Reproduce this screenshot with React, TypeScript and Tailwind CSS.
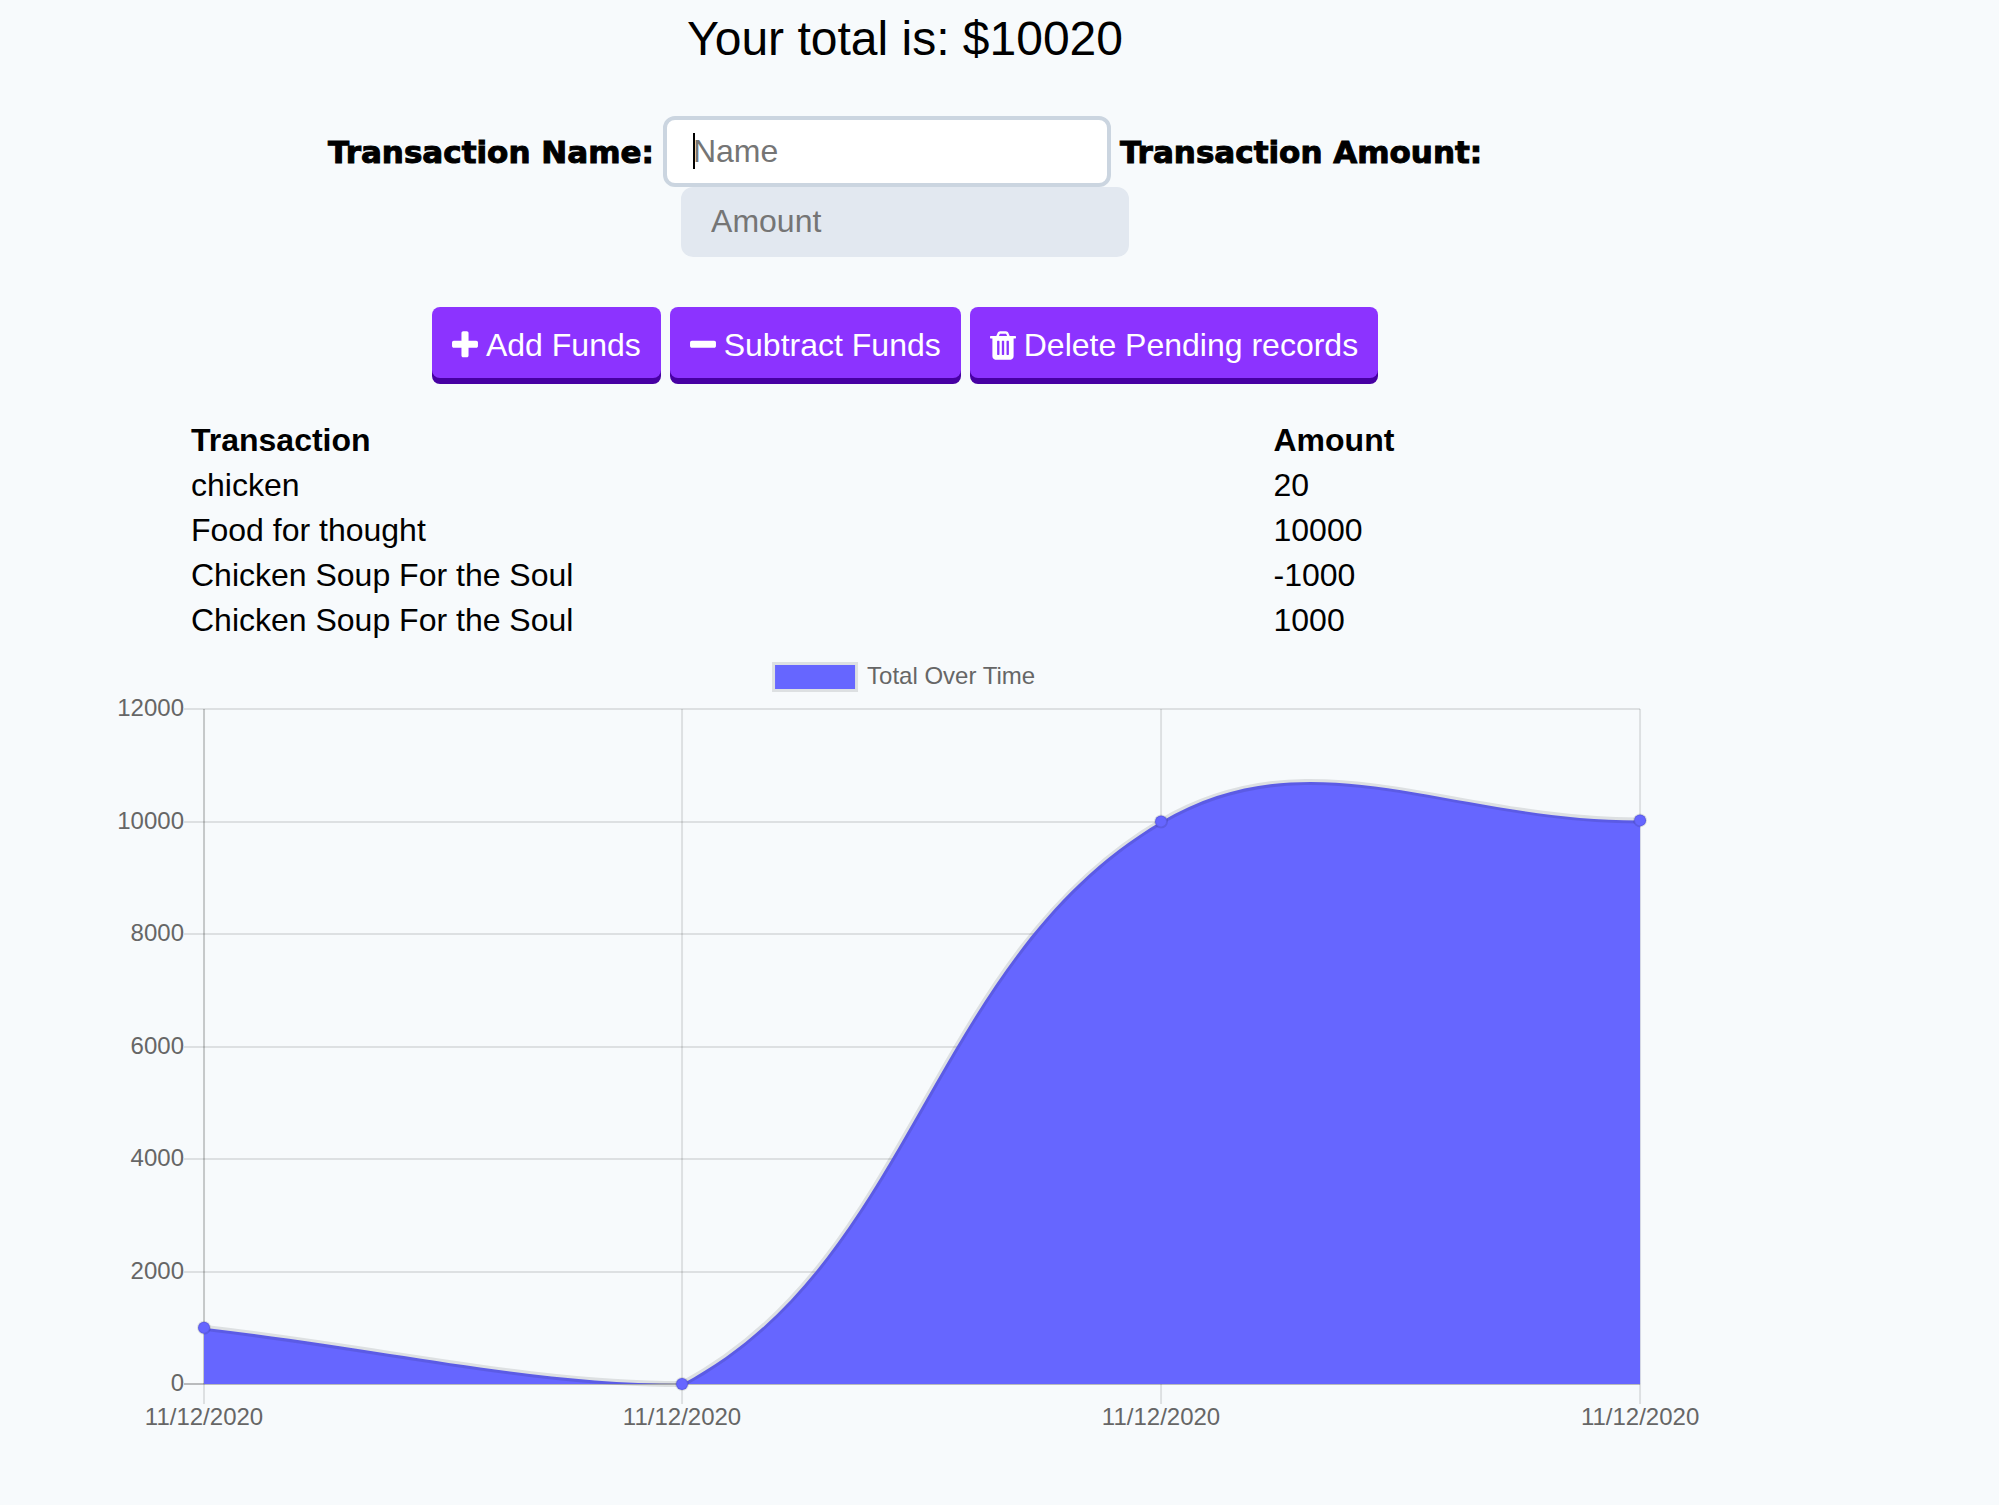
import type { ReactNode } from "react";

const transactions = [
  { name: "chicken", amount: 20 },
  { name: "Food for thought", amount: 10000 },
  { name: "Chicken Soup For the Soul", amount: -1000 },
  { name: "Chicken Soup For the Soul", amount: 1000 },
];

const icons = {
  plus: "M1600 736v192q0 40-28 68t-68 28h-416v416q0 40-28 68t-68 28h-192q-40 0-68-28t-28-68v-416h-416q-40 0-68-28t-28-68v-192q0-40 28-68t68-28h416v-416q0-40 28-68t68-28h192q40 0 68 28t28 68v416h416q40 0 68 28t28 68z",
  minus:
    "M1600 736v192q0 40-28 68t-68 28h-1216q-40 0-68-28t-28-68v-192q0-40 28-68t68-28h1216q40 0 68 28t28 68z",
  trash:
    "M704 1376v-704q0-14-9-23t-23-9h-64q-14 0-23 9t-9 23v704q0 14 9 23t23 9h64q14 0 23-9t9-23zm256 0v-704q0-14-9-23t-23-9h-64q-14 0-23 9t-9 23v704q0 14 9 23t23 9h64q14 0 23-9t9-23zm256 0v-704q0-14-9-23t-23-9h-64q-14 0-23 9t-9 23v704q0 14 9 23t23 9h64q14 0 23-9t9-23zm-544-992h448l-48-117q-7-9-17-11h-317q-10 2-17 11zm928 32v64q0 14-9 23t-23 9h-96v948q0 83-47 143.500t-113 60.500h-832q-66 0-113-58.500t-47-141.500v-952h-96q-14 0-23-9t-9-23v-64q0-14 9-23t23-9h309l70-167q15-37 54-63t79-26h320q40 0 79 26t54 63l70 167h309q14 0 23 9t9 23z",
};

function ActionButton({ icon, children }: { icon: keyof typeof icons; children: ReactNode }) {
  return (
    <button
      type="button"
      className="flex h-[71px] items-center gap-2 rounded-lg bg-[#8c33ff] px-5 pt-[5px] text-[32px] leading-[48px] text-white shadow-[0_6px_0_#4700a3]"
    >
      <svg viewBox="192 0 1408 1792" className="h-[33px] w-[26px] shrink-0" fill="currentColor" aria-hidden="true">
        <path d={icons[icon]} />
      </svg>
      {children}
    </button>
  );
}

type Point = { x: number; y: number };

const area = { left: 204, right: 1640, top: 59, bottom: 734 };
const ticks = [12000, 10000, 8000, 6000, 4000, 2000, 0];
const series = [
  { date: "11/12/2020", total: 1000 },
  { date: "11/12/2020", total: 0 },
  { date: "11/12/2020", total: 10000 },
  { date: "11/12/2020", total: 10020 },
];

const yOf = (value: number) => area.bottom - (value / 12000) * (area.bottom - area.top);
const points: Point[] = series.map((entry, i) => ({
  x: area.left + Math.floor((i * (area.right - area.left)) / (series.length - 1)),
  y: yOf(entry.total),
}));

const clampY = (y: number) => Math.min(area.bottom, Math.max(area.top, y));

// Control points on both sides of a point, for a spline of tension 0.4.
function controls(i: number) {
  const cur = points[i];
  const prev = points[i - 1] ?? cur;
  const next = points[i + 1] ?? cur;
  const before = Math.hypot(cur.x - prev.x, cur.y - prev.y);
  const after = Math.hypot(next.x - cur.x, next.y - cur.y);
  const a = (0.4 * before) / (before + after);
  const b = (0.4 * after) / (before + after);
  return {
    in: { x: cur.x - a * (next.x - prev.x), y: clampY(cur.y - a * (next.y - prev.y)) },
    out: { x: cur.x + b * (next.x - prev.x), y: clampY(cur.y + b * (next.y - prev.y)) },
  };
}

const linePath = points
  .map((p, i) => {
    if (i === 0) return `M${p.x} ${p.y}`;
    const c1 = controls(i - 1).out;
    const c2 = controls(i).in;
    return `C${c1.x} ${c1.y} ${c2.x} ${c2.y} ${p.x} ${p.y}`;
  })
  .join(" ");

function TotalChart() {
  return (
    <svg
      viewBox="0 0 1810 855"
      className="block w-full"
      role="img"
      aria-label="Total Over Time"
      fontFamily="'Liberation Sans', Arial, sans-serif"
      fontSize="24"
      fill="#666"
    >
      <rect x="775" y="15" width="80" height="24" fill="none" stroke="#000" strokeOpacity="0.1" strokeWidth="6" />
      <rect x="775" y="15" width="80" height="24" fill="#66f" />
      <text x="867" y="34">Total Over Time</text>

      {ticks.map((value) => (
        <g key={value}>
          <line
            x1={area.left - 20}
            x2={area.right}
            y1={Math.round(yOf(value))}
            y2={Math.round(yOf(value))}
            stroke="#000"
            strokeOpacity={value === 0 ? 0.25 : 0.1}
            strokeWidth="2"
          />
          <text x={area.left - 20} y={Math.round(yOf(value)) + 7} textAnchor="end">
            {value}
          </text>
        </g>
      ))}

      {points.map((p, i) => (
        <g key={i}>
          <line
            x1={p.x}
            x2={p.x}
            y1={area.top}
            y2={area.bottom}
            stroke="#000"
            strokeOpacity={i === 0 ? 0.2 : 0.1}
            strokeWidth="2"
          />
          <line
            x1={p.x}
            x2={p.x}
            y1={area.bottom}
            y2={area.bottom + 20}
            stroke="#000"
            strokeOpacity="0.1"
            strokeWidth="2"
          />
          <text x={p.x} y={area.bottom + 41} textAnchor="middle">
            {series[i].date}
          </text>
        </g>
      ))}

      <path d={`${linePath} L${area.right} ${area.bottom} L${area.left} ${area.bottom} Z`} fill="#66f" />
      <path d={linePath} fill="none" stroke="#000" strokeOpacity="0.1" strokeWidth="6" />
      {points.map((p, i) => (
        <circle key={i} cx={p.x} cy={p.y} r="6" fill="#66f" stroke="#000" strokeOpacity="0.1" strokeWidth="2" />
      ))}
    </svg>
  );
}

const labelClass =
  "font-['Arial_Black','DejaVu_Sans',sans-serif] text-[31px] leading-[48px] font-black [-webkit-text-stroke:1px_black]";

export default function App() {
  return (
    <div className="min-h-screen bg-[#f7fafc] font-['Liberation_Sans',Arial,sans-serif] text-black">
      <main className="flex w-[90.55%] flex-col items-center">
        <h1 className="pt-[3px] text-5xl leading-[72px]">Your total is: $10020</h1>

        <form className="mt-[41px] flex flex-wrap items-center justify-center gap-x-[9px] px-[15%]">
          <label htmlFor="transaction-name" className={labelClass}>
            Transaction Name:
          </label>
          <div className="relative">
            <input
              id="transaction-name"
              type="text"
              placeholder="Name"
              className="block h-[71px] w-[448px] rounded-xl border-4 border-[#cbd5e0] bg-white px-[26px] text-[32px] caret-transparent outline-none placeholder:text-[#757575]"
            />
            <span className="absolute top-[17px] left-[30px] h-9 w-[2px] bg-black" />
          </div>
          <label htmlFor="transaction-amount" className={labelClass}>
            Transaction Amount:
          </label>
          <input
            id="transaction-amount"
            type="text"
            placeholder="Amount"
            className="block h-[70px] w-[448px] rounded-xl border-4 border-[#e2e8f0] bg-[#e2e8f0] px-[26px] pb-[2px] text-[32px] outline-none placeholder:text-[#757575]"
          />
        </form>

        <div className="mt-[50px] flex gap-[9px]">
          <ActionButton icon="plus">Add Funds</ActionButton>
          <ActionButton icon="minus">Subtract Funds</ActionButton>
          <ActionButton icon="trash">Delete Pending records</ActionButton>
        </div>

        <table className="mt-10 w-[78.9%] table-fixed text-left text-[32px] leading-[45px]">
          <thead>
            <tr>
              <th className="w-[75.8%] font-bold">Transaction</th>
              <th className="font-bold">Amount</th>
            </tr>
          </thead>
          <tbody>
            {transactions.map((t, i) => (
              <tr key={i}>
                <td>{t.name}</td>
                <td>{t.amount}</td>
              </tr>
            ))}
          </tbody>
        </table>

        <div className="mt-[7px] w-full">
          <TotalChart />
        </div>
      </main>
    </div>
  );
}
